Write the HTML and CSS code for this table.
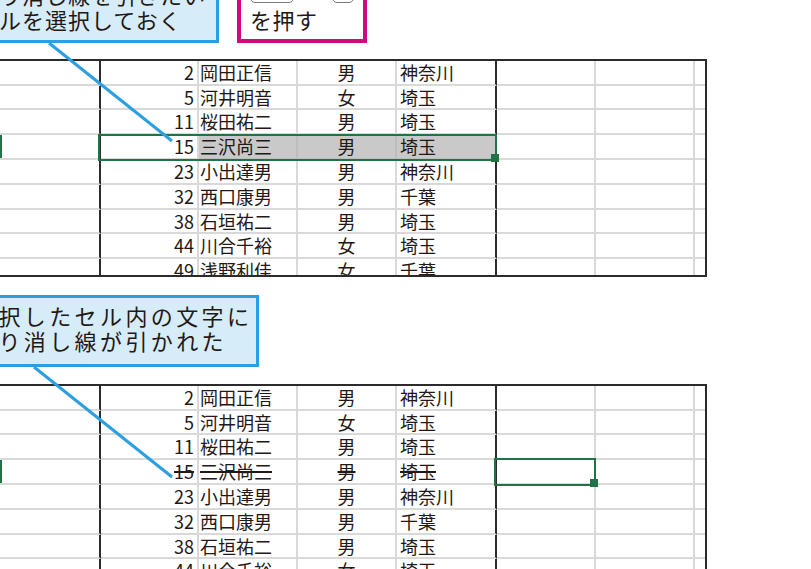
FILE: index.html
```html
<!DOCTYPE html>
<html lang="ja">
<head>
<meta charset="utf-8">
<title>取り消し線</title>
<link rel="stylesheet" href="styles.css">
</head>
<body>
<section class="fig">
  <div class="notes">
    <div class="callout callout-top">取り消し線を引きたい<br>セルを選択しておく</div>
    <div class="keybox">
      <div class="keys"><span class="key key-ctrl">Ctrl</span><span class="plus">+</span><span class="key key-5">5</span></div>
      <div class="press">を押す</div>
    </div>
  </div>
  <div class="sheet sheet-top">
    <div class="row"><div class="c ca"></div><div class="c cb">2</div><div class="c cc">岡田正信</div><div class="c cd">男</div><div class="c ce">神奈川</div><div class="c cf"></div><div class="c cg"></div><div class="c ch"></div></div>
    <div class="row short"><div class="c ca"></div><div class="c cb">5</div><div class="c cc">河井明音</div><div class="c cd">女</div><div class="c ce">埼玉</div><div class="c cf"></div><div class="c cg"></div><div class="c ch"></div></div>
    <div class="row"><div class="c ca"></div><div class="c cb">11</div><div class="c cc">桜田祐二</div><div class="c cd">男</div><div class="c ce">埼玉</div><div class="c cf"></div><div class="c cg"></div><div class="c ch"></div></div>
    <div class="row"><div class="c ca mark"></div><div class="c cb">15</div><div class="c cc gray">三沢尚三</div><div class="c cd gray">男</div><div class="c ce gray">埼玉</div><div class="c cf"></div><div class="c cg"></div><div class="c ch"></div><div class="sel sel-top"></div><div class="handle handle-top"></div></div>
    <div class="row"><div class="c ca"></div><div class="c cb">23</div><div class="c cc">小出達男</div><div class="c cd">男</div><div class="c ce">神奈川</div><div class="c cf"></div><div class="c cg"></div><div class="c ch"></div></div>
    <div class="row"><div class="c ca"></div><div class="c cb">32</div><div class="c cc">西口康男</div><div class="c cd">男</div><div class="c ce">千葉</div><div class="c cf"></div><div class="c cg"></div><div class="c ch"></div></div>
    <div class="row short"><div class="c ca"></div><div class="c cb">38</div><div class="c cc">石垣祐二</div><div class="c cd">男</div><div class="c ce">埼玉</div><div class="c cf"></div><div class="c cg"></div><div class="c ch"></div></div>
    <div class="row"><div class="c ca"></div><div class="c cb">44</div><div class="c cc">川合千裕</div><div class="c cd">女</div><div class="c ce">埼玉</div><div class="c cf"></div><div class="c cg"></div><div class="c ch"></div></div>
    <div class="row"><div class="c ca"></div><div class="c cb">49</div><div class="c cc">浅野利佳</div><div class="c cd">女</div><div class="c ce">千葉</div><div class="c cf"></div><div class="c cg"></div><div class="c ch"></div></div>
  </div>
</section>

<section class="fig">
  <div class="callout callout-bottom">選択したセル内の文字に<br>取り消し線が引かれた</div>
  <div class="sheet sheet-bottom">
    <div class="row"><div class="c ca"></div><div class="c cb">2</div><div class="c cc">岡田正信</div><div class="c cd">男</div><div class="c ce">神奈川</div><div class="c cf"></div><div class="c cg"></div><div class="c ch"></div></div>
    <div class="row short"><div class="c ca"></div><div class="c cb">5</div><div class="c cc">河井明音</div><div class="c cd">女</div><div class="c ce">埼玉</div><div class="c cf"></div><div class="c cg"></div><div class="c ch"></div></div>
    <div class="row"><div class="c ca"></div><div class="c cb">11</div><div class="c cc">桜田祐二</div><div class="c cd">男</div><div class="c ce">埼玉</div><div class="c cf"></div><div class="c cg"></div><div class="c ch"></div></div>
    <div class="row"><div class="c ca mark"></div><div class="c cb"><s>15</s></div><div class="c cc"><s>三沢尚三</s></div><div class="c cd"><s>男</s></div><div class="c ce"><s>埼玉</s></div><div class="c cf"></div><div class="c cg"></div><div class="c ch"></div><div class="sel sel-bottom"></div><div class="handle handle-bottom"></div></div>
    <div class="row"><div class="c ca"></div><div class="c cb">23</div><div class="c cc">小出達男</div><div class="c cd">男</div><div class="c ce">神奈川</div><div class="c cf"></div><div class="c cg"></div><div class="c ch"></div></div>
    <div class="row"><div class="c ca"></div><div class="c cb">32</div><div class="c cc">西口康男</div><div class="c cd">男</div><div class="c ce">千葉</div><div class="c cf"></div><div class="c cg"></div><div class="c ch"></div></div>
    <div class="row short"><div class="c ca"></div><div class="c cb">38</div><div class="c cc">石垣祐二</div><div class="c cd">男</div><div class="c ce">埼玉</div><div class="c cf"></div><div class="c cg"></div><div class="c ch"></div></div>
    <div class="row"><div class="c ca"></div><div class="c cb">44</div><div class="c cc">川合千裕</div><div class="c cd">女</div><div class="c ce">埼玉</div><div class="c cf"></div><div class="c cg"></div><div class="c ch"></div></div>
  </div>
</section>

<svg class="leaders" width="811" height="569" viewBox="0 0 811 569" aria-hidden="true">
  <line x1="49" y1="43" x2="172" y2="141" />
  <line x1="34" y1="367" x2="172" y2="477" />
</svg>
</body>
</html>
```

FILE: styles.css
```css
* {
  box-sizing: border-box;
  margin: 0;
  padding: 0;
}

html, body {
  width: 811px;
  height: 569px;
  overflow: hidden;
  background: #ffffff;
}

body {
  position: relative;
  font-family: "Noto Sans CJK JP", "Noto Sans", sans-serif;
  color: #231815;
}

.notes {
  height: 59px;
  display: flex;
  align-items: flex-start;
}

.callout {
  background: #d6ecf9;
  border: 3px solid #2b9fe0;
  font-size: 22px;
  line-height: 25px;
  white-space: nowrap;
  margin-left: -40px;
}

.callout-top {
  width: 259px;
  margin-top: -25px;
  padding: 4px 0 8px 13px;
  letter-spacing: 1px;
}

.callout-bottom {
  width: 299px;
  margin-top: 18px;
  padding: 5px 0 11px 10px;
  letter-spacing: 3.4px;
}

.keybox {
  width: 130px;
  margin-left: 18px;
  margin-top: -29px;
  border: 4px solid #d1087e;
  background: #ffffff;
  padding: 4px 0 7px 9px;
}

.keys {
  display: flex;
  align-items: center;
  height: 24px;
}

.key {
  height: 24px;
  border: 1.5px solid #7a7a7a;
  border-radius: 5px;
  font-size: 13px;
  display: flex;
  align-items: center;
  justify-content: center;
}

.key-ctrl { width: 44px; }
.key-5 { width: 22px; }

.plus {
  width: 38px;
  text-align: center;
  font-size: 16px;
}

.press {
  margin-top: 4px;
  font-size: 22px;
  line-height: 25px;
  letter-spacing: 0.5px;
}

.sheet {
  width: 707px;
  border-top: 2px solid #2b2b2b;
  border-right: 2px solid #2b2b2b;
  overflow: hidden;
}

.sheet-top {
  height: 218px;
  border-bottom: 2px solid #2b2b2b;
}

.sheet-bottom {
  margin-top: 17px;
  height: 200px;
}

.row {
  position: relative;
  display: flex;
  height: 25px;
}

.row.short {
  height: 24px;
}

.c {
  flex: none;
  border-right: 2px solid #d9d9d9;
  border-bottom: 2px solid #d9d9d9;
  font-size: 18px;
  line-height: 23px;
  white-space: nowrap;
  overflow: hidden;
}

.row.short .c {
  line-height: 22px;
}

.ca { width: 101px; border-right-color: #2b2b2b; }
.cb { width: 98px; text-align: right; padding-right: 3px; }
.cc { width: 99px; padding-left: 1px; }
.cd { width: 99px; text-align: center; }
.ce { width: 100px; padding-left: 3px; border-right-color: #2b2b2b; }
.cf { width: 99px; }
.cg { width: 99px; }
.ch { width: 10px; border-right: none; }

.c.gray {
  background: #c9c9c9;
  border-bottom-color: #bdbdbd;
}

.cc.gray, .cd.gray {
  border-right-color: #bdbdbd;
}

.ca.mark {
  box-shadow: inset 2px 0 0 #217346;
}

.c s {
  text-decoration: line-through;
  text-decoration-thickness: 1.5px;
}

.sel {
  position: absolute;
  z-index: 1;
  border: 2px solid #217346;
}

.sel-top {
  left: 98px;
  top: -1px;
  width: 399px;
  height: 27px;
}

.sel-bottom {
  left: 494px;
  top: -2px;
  width: 102px;
  height: 28px;
}

.handle {
  position: absolute;
  z-index: 2;
  width: 8px;
  height: 8px;
  background: #217346;
}

.handle-top {
  left: 491px;
  top: 19px;
}

.handle-bottom {
  left: 590px;
  top: 19px;
}

.leaders {
  position: absolute;
  z-index: 3;
  left: 0;
  top: 0;
  pointer-events: none;
}

.leaders line {
  stroke: #2b9fe0;
  stroke-width: 3;
}
```
